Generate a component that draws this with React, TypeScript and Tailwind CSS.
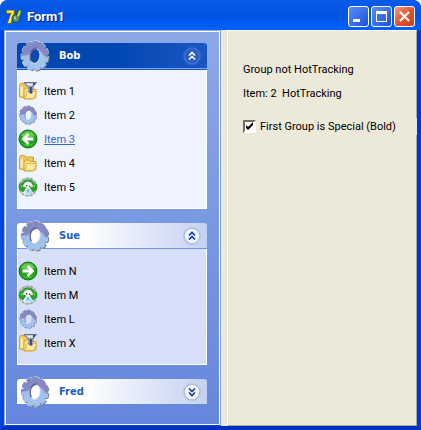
import React, { useState } from "react";

const TEETH = Array.from({ length: 11 }, (_, i) => i * 32.73);

function Gear({ id, size, hole = "#fff" }: { id: string; size: number; hole?: string }) {
  return (
    <svg width={size} height={size} viewBox="0 0 32 32" aria-hidden="true" className="shrink-0">
      <defs>
        <mask id={id + "m"}>
          <ellipse cx="16" cy="16" rx="11.8" ry="13" fill="#fff" />
          {TEETH.map((a) => (
            <rect key={a} x="13" y="1.4" width="6" height="6" rx="1.4" fill="#fff" transform={`rotate(${a + 6} 16 16)`} />
          ))}
        </mask>
      </defs>
      <g transform="translate(16 16) scale(.93 1) translate(-16 -16)">
        <ellipse cx="16" cy="16" rx="12.4" ry="13.6" fill="#f1f1ea" />
        {TEETH.map((a) => (
          <rect key={a} x="12.6" y="0.6" width="6.8" height="6" rx="1.8" fill="#f1f1ea" transform={`rotate(${a + 6} 16 16)`} />
        ))}
        <g transform="translate(.8 .9)">
          <rect width="32" height="32" fill="#74798a" mask={`url(#${id}m)`} />
        </g>
        <g transform="translate(-.5 -.4)">
          <rect width="32" height="32" fill="#8a90a6" mask={`url(#${id}m)`} />
        </g>
        <g mask={`url(#${id}m)`}>
          <rect width="32" height="32" fill="#a0c3ee" />
          <path d="M0 0h32v18l-5-1-4-5-5-2-5 2-5 3-8 1z" fill="#8388c6" />
          <path d="M5 17l6-3M22 12l5 5" stroke="#a9aedc" strokeWidth="1.200" />
        </g>
        <ellipse cx="16" cy="16" rx="5.3" ry="7.4" fill={hole} stroke="#e6e8ee" strokeWidth=".9" transform="rotate(12 16 16)" />
        <path d="M12 21.500C9 16 11.500 8.500 18 8" fill="none" stroke="#565d88" strokeWidth="1.300" />
      </g>
    </svg>
  );
}

function FolderIcon({ filter = false }: { filter?: boolean }) {
  return (
    <svg width="20" height="20" viewBox="0 0 20 20" aria-hidden="true" className="shrink-0">
      <path d="M1.500 4.500l1-2h4l1 1.500h8v11l-6 2.500-8-1.500z" fill="#efc95c" stroke="#d6a136" />
      <path d="M2.500 5.500h2.500v9.500l-2.500-.5z" fill="#fbeeb0" />
      <path d="M6 9l1-2h4l1 1.500h6v8l-3 1.500H6z" fill="#f7de80" stroke="#d6a136" />
      <path d="M7 17.500l2-7h9.500l-2.500 7z" fill="#fbeaa0" stroke="#dcae45" strokeWidth=".8" />
      {filter && (
        <>
          <path d="M6 1.500h12.500l-4.500 5v6l-3-1v-5z" fill="#a3adbb" stroke="#66738a" />
          <path d="M8 2.500h8l-2 2h-4z" fill="#e6edf3" />
          <path d="M12 6h1.800v6H12zM15 2h2v2h-2z" fill="#2242c4" />
        </>
      )}
    </svg>
  );
}

function ArrowIcon({ left = false }: { left?: boolean }) {
  return (
    <svg width="20" height="20" viewBox="0 0 20 20" aria-hidden="true" className="shrink-0">
      <circle cx="10" cy="10" r="9" fill="#23a01c" stroke="#0c7a12" />
      <path d="M3 7a7.500 7.500 0 0 1 14 0q-7 4-14 0z" fill="#63c94a" />
      <path d="M4 14a7.500 7.500 0 0 0 12 0q-6 3-12 0z" fill="#42c934" />
      <path
        d="M4.500 10H15M9.500 5l5 5-5 5"
        fill="none"
        stroke="#fff"
        strokeWidth="2.800"
        transform={left ? "rotate(180 10 10)" : undefined}
      />
    </svg>
  );
}

function RefreshIcon() {
  return (
    <svg width="20" height="20" viewBox="0 0 20 20" aria-hidden="true" className="shrink-0">
      <circle cx="10" cy="10" r="8.800" fill="#f2f6f6" stroke="#9aa5a6" strokeWidth="1.600" strokeDasharray="3.500 .8" />
      <path d="M4 8.500C5 4.500 7 3.500 10 3.500s5 1 6 5" fill="none" stroke="#3c9e3a" strokeWidth="2.600" />
      <path d="M1 7.500l3-2 1 4 3.500 1-3.500 5-4-3z" fill="#2ba128" />
      <path d="M19 7.500l-3-2-1 4-3.500 1 3.500 5 4-3z" fill="#2ba128" />
      <path d="M2.500 9l1.500-1 .5 3zM17.500 9L16 8l-.5 3z" fill="#8fdd7d" />
      <path d="M7 7.500l3-1.500 3 1.500-1 3H8z" fill="#fff" />
      <path d="M8 8h1.500v1.500H8zM11 8.500h1.500V10H11z" fill="#47566b" />
      <path d="M7 14l3-3 3.500 3 2 2-3 1.500H8z" fill="#b5d9f2" />
      <path d="M9 12.500h2v2H9z" fill="#6ea5d8" />
    </svg>
  );
}

function Logo() {
  return (
    <svg width="16" height="16" viewBox="0 0 16 16" aria-hidden="true" className="shrink-0">
      <path d="M.5 1.500h8v2.500L5 14.500H1.500L5 4.500H.5z" fill="#f2de35" stroke="#7a6712" />
      <path d="M1 2h7M5.500 5l-3 9" stroke="#fff7a0" strokeWidth=".8" />
      <circle cx="10" cy="9.500" r="4" fill="#5a8f6d" stroke="#2b4938" />
      <path d="M8 8l2-1 1 2-2 2z" fill="#a7d5b2" />
      <path d="M10 8.500l3-7.500 2.500.5-2 6z" fill="#d5ec2b" stroke="#38501a" strokeWidth=".7" />
    </svg>
  );
}

function Chevrons({ down = false, light = false }: { down?: boolean; light?: boolean }) {
  return (
    <svg width="18" height="18" viewBox="0 0 18 18" aria-hidden="true">
      <circle cx="9" cy="9" r="8" fill={light ? "#2a5fc4" : "#f1f4fb"} stroke={light ? "#4070cc" : "#aabce6"} strokeWidth="1.500" />
      <path
        d="M6 8.500l3-3 3 3M6 12.500l3-3 3 3"
        fill="none"
        stroke={light ? "#fff" : "#0a3aa8"}
        strokeWidth="1.600"
        transform={down ? "rotate(180 9 9)" : undefined}
      />
    </svg>
  );
}

type Item = { label: string; icon: React.ReactNode; hot?: boolean };

function Group({ title, items, special = false }: { title: string; items?: Item[]; special?: boolean }) {
  const header = special
    ? "bg-linear-to-r from-[#0047b2] from-50% to-[#1a56c2] text-white"
    : "bg-linear-to-r from-white from-35% to-[#c5d1f0] text-[#215dc6]";
  return (
    <section>
      <h2>
        <button
          type="button"
          aria-expanded={!!items}
          className={`flex h-[25px] w-full items-center rounded-t-[3px] pr-[6px] pl-[2px] text-left font-['DejaVu_Sans_Condensed','DejaVu_Sans',sans-serif] text-[11px] font-bold ${header}`}
        >
          <Gear id={"gear" + title} size={32} hole={special ? "#0a4ab2" : "#fff"} />
          <span className="grow pl-2">{title}</span>
          <Chevrons light={special} down={!items} />
        </button>
      </h2>
      {items && (
        <div className={special ? "border-t border-[#7da2e8] bg-[#1a56c2] pt-px" : "border-t border-[#7396df]"}>
          <ul
            className={`border border-t-0 border-white pb-[9px] ${special ? "bg-[#eff3ff] pt-[9px]" : "bg-[#d6dff7] pt-[10px]"}`}
          >
            {items.map((it) => (
              <li key={it.label} className="flex h-6 items-center gap-[6px]">
                {it.icon}
                <a href="#" className={`pt-[2px] ${it.hot ? "text-[#316ac5] underline" : "text-black"}`}>
                  {it.label}
                </a>
              </li>
            ))}
          </ul>
        </div>
      )}
    </section>
  );
}

const BOB: Item[] = [
  { label: "Item 1", icon: <FolderIcon filter /> },
  { label: "Item 2", icon: <Gear size={20} id="b2" hole="#eff3ff" /> },
  { label: "Item 3", icon: <ArrowIcon left />, hot: true },
  { label: "Item 4", icon: <FolderIcon /> },
  { label: "Item 5", icon: <RefreshIcon /> },
];
const SUE: Item[] = [
  { label: "Item N", icon: <ArrowIcon /> },
  { label: "Item M", icon: <RefreshIcon /> },
  { label: "Item L", icon: <Gear size={20} id="s3" hole="#d6dff7" /> },
  { label: "Item X", icon: <FolderIcon filter /> },
];

const caption = "flex size-[21px] items-center justify-center rounded-[3px] border border-white bg-linear-to-br";

export default function App() {
  const [special, setSpecial] = useState(true);
  return (
    <div className="flex min-h-screen flex-col rounded-t-lg bg-[#0046e0] font-['Roboto',sans-serif] text-[11px] leading-4 text-black">
      <header className="flex h-[30px] items-center gap-[5px] rounded-t-lg bg-linear-to-b from-[#0a5be8] via-[#0054e3] to-[#0062ff] pt-[3px] pr-[6px] pl-[6px]">
        <Logo />
        <h1 className="grow text-[13px] font-bold text-white text-shadow-[1px_1px_0_#0a1883]">Form1</h1>
        <div className="flex gap-[2px]">
          <button type="button" aria-label="Minimize" className={`${caption} from-[#5b8df5] to-[#1c4fe0]`}>
            <svg width="19" height="19" viewBox="0 0 19 19"><path d="M4 12h7v3H4z" fill="#fff" /></svg>
          </button>
          <button type="button" aria-label="Maximize" className={`${caption} from-[#5b8df5] to-[#1c4fe0]`}>
            <svg width="19" height="19" viewBox="0 0 19 19"><path d="M4 4h11v11H4zM5 7v7h9V7z" fill="#fff" fillRule="evenodd" /></svg>
          </button>
          <button type="button" aria-label="Close" className={`${caption} from-[#f09a80] via-[#e2552f] to-[#cf3d12]`}>
            <svg width="19" height="19" viewBox="0 0 19 19"><path d="M5 5l9 9M14 5l-9 9" stroke="#fff" strokeWidth="2.200" /></svg>
          </button>
        </div>
      </header>
      <main className="flex grow border-x-4 border-b-4 border-r-[#0038d0] border-b-[#0030c0] border-l-[#0046e0] bg-[#ece9d8]">
        <nav className="w-[217px] shrink-0 border border-t-[#9db0cc] border-r-[#7b9ad0] border-b-[#0046e0] border-l-[#9db0cc]">
          <div className="flex h-full flex-col gap-[14px] border border-white bg-linear-to-b from-[#8ca9e6] to-[#6487dc] pt-[11px] pr-3 pl-[11px]">
            <Group title="Bob" items={BOB} special={special} />
            <Group title="Sue" items={SUE} />
            <Group title="Fred" />
          </div>
        </nav>
        <section className="ml-[6px] grow border border-t-white border-r-[#aca899] border-b-[#aca899] border-l-white pt-[31px] pl-[15px]">
          <p className="h-6">Group not HotTracking</p>
          <p className="h-8 whitespace-pre">Item: 2  HotTracking</p>
          <label className="-mr-px flex h-[17px] items-center gap-1 bg-[#ece9d8]">
            <span className="grid size-[13px]">
              <input
                type="checkbox"
                checked={special}
                onChange={(e) => setSpecial(e.target.checked)}
                className="peer col-start-1 row-start-1 size-[13px] appearance-none border-2 border-t-[#716f64] border-r-white border-b-white border-l-[#716f64] bg-white"
              />
              <svg viewBox="0 0 13 13" className="pointer-events-none col-start-1 row-start-1 hidden size-[13px] peer-checked:block">
                <path d="M3 5v3l2 2 5-5V2L5 7z" fill="#000" />
              </svg>
            </span>
            First Group is Special (Bold)
          </label>
        </section>
      </main>
    </div>
  );
}
